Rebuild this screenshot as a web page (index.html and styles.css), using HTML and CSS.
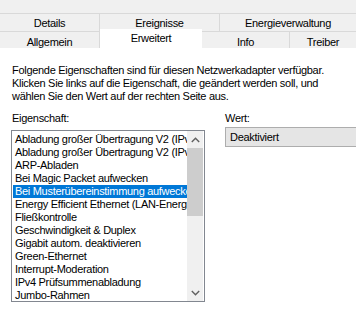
FILE: index.html
```html
<!DOCTYPE html>
<html lang="de">
<head>
<meta charset="utf-8">
<link rel="stylesheet" href="styles.css">
</head>
<body>
<div class="dialog">
  <div class="topstrip"></div>
  <div class="tabrow row1">
    <div class="tab w100">Details</div>
    <div class="tab w120">Ereignisse</div>
    <div class="tab grow">Energieverwaltung</div>
  </div>
  <div class="tabrow row2">
    <div class="tab w100">Allgemein</div>
    <div class="tab sel">Erweitert</div>
    <div class="tab w88">Info</div>
    <div class="tab grow">Treiber</div>
  </div>
  <div class="content">
    <p class="desc">Folgende Eigenschaften sind für diesen Netzwerkadapter verfügbar.<br>Klicken Sie links auf die Eigenschaft, die geändert werden soll, und<br>wählen Sie den Wert auf der rechten Seite aus.</p>
    <div class="cols">
      <div class="left">
        <div class="label">Eigenschaft:</div>
        <div class="listbox">
          <ul class="items">
            <li>Abladung großer Übertragung V2 (IPv4)</li>
            <li>Abladung großer Übertragung V2 (IPv6)</li>
            <li>ARP-Abladen</li>
            <li>Bei Magic Packet aufwecken</li>
            <li class="selected">Bei Musterübereinstimmung aufwecken</li>
            <li>Energy Efficient Ethernet (LAN-Energiesparmodus)</li>
            <li>Fließkontrolle</li>
            <li>Geschwindigkeit &amp; Duplex</li>
            <li>Gigabit autom. deaktivieren</li>
            <li>Green-Ethernet</li>
            <li>Interrupt-Moderation</li>
            <li>IPv4 Prüfsummenabladung</li>
            <li>Jumbo-Rahmen</li>
          </ul>
          <div class="scrollbar">
            <div class="sbtn"><svg width="9" height="6" viewBox="0 0 9 6"><path d="M0.8 5 L4.5 1.3 L8.2 5" fill="none" stroke="#606060" stroke-width="1.4"/></svg></div>
            <div class="thumb"></div>
            <div class="track"></div>
            <div class="sbtn"><svg width="9" height="6" viewBox="0 0 9 6"><path d="M0.8 1 L4.5 4.7 L8.2 1" fill="none" stroke="#606060" stroke-width="1.4"/></svg></div>
          </div>
        </div>
      </div>
      <div class="right">
        <div class="label">Wert:</div>
        <div class="combo">Deaktiviert</div>
      </div>
    </div>
  </div>
</div>
</body>
</html>
```
FILE: styles.css
```css
html, body {
  margin: 0;
  padding: 0;
  background: #ffffff;
}
body {
  font-family: "Liberation Sans", Arial, sans-serif;
  font-size: 11px;
  letter-spacing: -0.3px;
  color: #000;
  overflow: hidden;
}
.dialog {
  width: 356px;
  height: 323px;
  overflow: hidden;
}
.topstrip {
  height: 13px;
  background: #f0f0f0;
}
.tabrow {
  display: flex;
  background: #f0f0f0;
}
.row1 {
  height: 18px;
  border-top: 1px solid #d9d9d9;
  box-sizing: border-box;
}
.row2 {
  height: 17px;
  border-top: 1px solid #d9d9d9;
  box-sizing: border-box;
}
.tab {
  box-sizing: border-box;
  text-align: center;
  border-right: 1px solid #d9d9d9;
  white-space: nowrap;
  flex: none;
}
.w100 { width: 100px; }
.w120 { width: 120px; }
.w88 { width: 88px; }
.grow { flex: 1 1 auto; border-right: none; }
.row1 .tab { line-height: 18px; }
.row2 .tab { line-height: 20px; }
.tab.sel {
  width: 102px;
  background: #ffffff;
  margin-top: -3px;
  height: 20px;
  line-height: 18px;
  border-right: none;
}
.content {
  padding: 16px 0 0 0;
}
.desc {
  margin: 0 0 9px 12px;
  line-height: 13px;
  white-space: nowrap;
}
.cols {
  display: flex;
}
.left {
  margin-left: 11px;
  width: 194px;
}
.label {
  line-height: 13px;
  height: 13px;
}
.left .label { margin-left: 1px; margin-bottom: 5px; }
.right {
  margin-left: 20px;
  flex: 1;
}
.right .label { margin-bottom: 2px; }
.listbox {
  box-sizing: border-box;
  width: 194px;
  height: 172px;
  border: 1px solid #828790;
  display: flex;
  background: #fff;
  overflow: hidden;
}
.items {
  list-style: none;
  margin: 0;
  padding: 2px 0 0 1px;
  flex: 1;
  min-width: 0;
  overflow: hidden;
}
.items li {
  height: 13px;
  line-height: 13px;
  padding-left: 2px;
  white-space: nowrap;
  overflow: hidden;
}
.items li.selected {
  background: #0078d7;
  color: #fff;
}
.scrollbar {
  width: 16px;
  flex: none;
  display: flex;
  flex-direction: column;
  background: #f0f0f0;
  margin-right: 1px;
}
.sbtn {
  height: 17px;
  display: flex;
  align-items: center;
  justify-content: center;
  flex: none;
}
.thumb {
  height: 68px;
  background: #cdcdcd;
  flex: none;
}
.track { flex: 1; }
.combo {
  box-sizing: border-box;
  height: 20px;
  border: 1px solid #adadad;
  border-right: none;
  background: #e5e5e5;
  padding-left: 4px;
  line-height: 18px;
}
```
